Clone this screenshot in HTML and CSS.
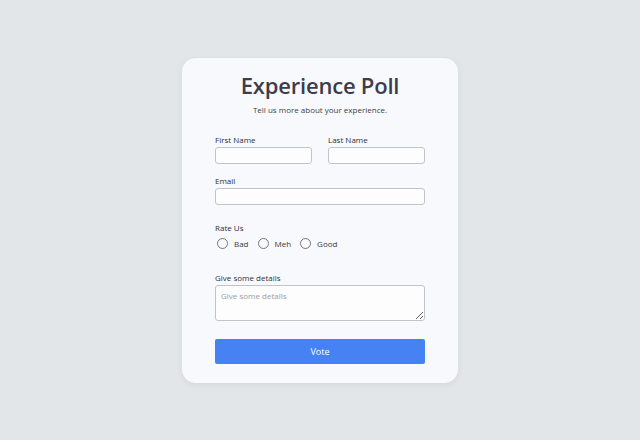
FILE: index.html
```html
<!DOCTYPE html>
<html lang="en">
<head>
<meta charset="utf-8">
<title>Experience Poll</title>
<link rel="stylesheet" href="styles.css">
</head>
<body>
<form class="card">
  <h1 class="title">Experience Poll</h1>
  <p class="subtitle">Tell us more about your experience.</p>
  <div class="row">
    <div class="field">
      <label class="label" for="fn">First Name</label>
      <input class="input" id="fn" type="text">
    </div>
    <div class="field">
      <label class="label" for="ln">Last Name</label>
      <input class="input" id="ln" type="text">
    </div>
  </div>
  <div class="field">
    <label class="label" for="em">Email</label>
    <input class="input" id="em" type="email">
  </div>
  <div class="field rate">
    <span class="label">Rate Us</span>
    <div class="options">
      <label class="opt"><input class="radio" type="radio" name="r"><span>Bad</span></label>
      <label class="opt"><input class="radio" type="radio" name="r"><span>Meh</span></label>
      <label class="opt"><input class="radio" type="radio" name="r"><span>Good</span></label>
    </div>
  </div>
  <div class="field details">
    <label class="label" for="dt">Give some details</label>
    <textarea class="textarea" id="dt" placeholder="Give some details"></textarea>
  </div>
  <button class="btn" type="button">Vote</button>
</form>
</body>
</html>
```
FILE: styles.css
```css
* { box-sizing: border-box; }
html, body { margin: 0; padding: 0; }
body {
  width: 640px;
  height: 440px;
  background: #e2e6e9;
  display: flex;
  align-items: center;
  justify-content: center;
  font-family: "Open Sans", "DejaVu Sans", sans-serif;
  color: #33323f;
}
.card {
  width: 276px;
  height: 325px;
  background: #f8f9fd;
  border-radius: 14px;
  box-shadow: 0 2px 6px rgba(60, 70, 90, 0.08);
  padding: 13px 33px 0;
  display: flex;
  flex-direction: column;
}
.title {
  margin: 0;
  font-size: 22px;
  line-height: 28px;
  font-weight: 600;
  text-align: center;
  color: #3d3c4c;
  letter-spacing: -0.2px;
}
.subtitle {
  margin: 5px 0 0;
  font-size: 8px;
  line-height: 12px;
  font-weight: 500;
  text-align: center;
  color: #3e3e48;
}
.row {
  display: grid;
  grid-template-columns: minmax(0, 1fr) minmax(0, 1fr);
  column-gap: 16px;
  margin-top: 18px;
}
.field {
  display: flex;
  flex-direction: column;
  min-width: 0;
}
.row + .field { margin-top: 11px; }
.label {
  font-size: 8px;
  line-height: 12px;
  font-weight: 500;
  color: #2e2e38;
  margin-bottom: 1px;
}
.input {
  width: 100%;
  min-width: 0;
  height: 17px;
  border: 1px solid #c3c4ca;
  border-radius: 3px;
  background: #fdfdfe;
  font: inherit;
  padding: 0 5px;
  margin: 0;
  outline: none;
}
.rate { margin-top: 17px; }
.options {
  display: flex;
  align-items: center;
  margin-top: 3px;
  padding-left: 2px;
}
.opt {
  display: inline-flex;
  align-items: center;
  gap: 6px;
  margin-right: 9px;
  font-size: 8px;
  line-height: 12px;
  font-weight: 500;
  color: #3a3a44;
}
.radio {
  appearance: none;
  -webkit-appearance: none;
  width: 11px;
  height: 11px;
  margin: 0;
  border: 1px solid #75757d;
  border-radius: 50%;
  background: #fbfbfd;
}
.details { margin-top: 22px; }
.textarea {
  height: 36px;
  border: 1px solid #c3c4ca;
  border-radius: 3px;
  background: #fdfdfe;
  font: inherit;
  font-size: 8px;
  font-weight: 400;
  padding: 4px 5px;
  margin: 0;
  outline: none;
  resize: vertical;
}
.textarea::placeholder { color: #9c9ca4; }
.btn {
  margin-top: 18px;
  height: 25px;
  border: none;
  border-radius: 2px;
  background: #4682f3;
  color: #ffffff;
  font-family: inherit;
  font-size: 9px;
  font-weight: 500;
  cursor: pointer;
}
```
